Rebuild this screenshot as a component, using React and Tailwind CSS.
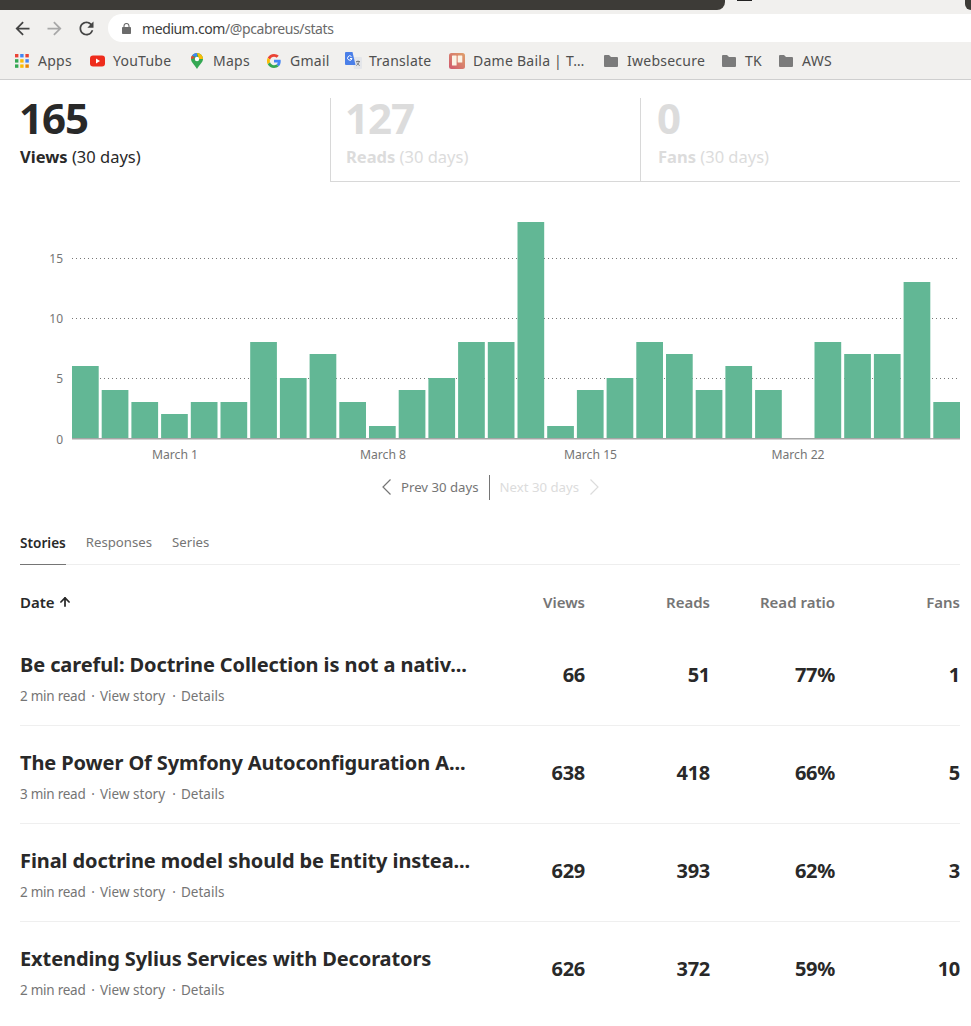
import React from "react";
import { ArrowUp } from "lucide-react";

const bars = [6,4,3,2,3,3,8,5,7,3,1,4,5,8,8,18,1,4,5,8,7,4,6,4,0,8,7,7,13,3];

const Material = ({ d, fill, size = 21 }) => (
  <svg width={size} height={size} viewBox="0 0 24 24" className="shrink-0"><path d={d} fill={fill} /></svg>
);
const BACK = "M20 11H7.830l5.590-5.590L12 4l-8 8 8 8 1.410-1.410L7.830 13H20v-2z";
const FORWARD = "M4 11h12.170l-5.590-5.590L12 4l8 8-8 8-1.410-1.410L16.170 13H4v-2z";
const RELOAD = "M17.650 6.350A7.958 7.958 0 0 0 12 4c-4.420 0-7.990 3.580-7.990 8s3.570 8 7.990 8c3.730 0 6.840-2.550 7.730-6h-2.080A5.990 5.990 0 0 1 12 18c-3.310 0-6-2.690-6-6s2.690-6 6-6c1.660 0 3.140.690 4.220 1.780L13 11h7V4l-2.350 2.350z";

const LockIcon = () => (
  <svg width="9" height="11" viewBox="0 0 9 11" className="shrink-0">
    <path d="M2 4.500V3a2.500 2.500 0 0 1 5 0v1.500" fill="none" stroke="#6b6b6b" strokeWidth="1.100" />
    <rect x="0" y="4" width="9" height="7" rx="0.800" fill="#6b6b6b" />
  </svg>
);

const Folder = () => (
  <svg width="14" height="12" viewBox="0 0 14 12" className="shrink-0"><path d="M1 0h4l2 2h6a1 1 0 0 1 1 1v8a1 1 0 0 1-1 1H1a1 1 0 0 1-1-1V1a1 1 0 0 1 1-1z" fill="#7b7b7b"/></svg>
);

const AppsIcon = () => {
  const c = ["#ea4335","#4285f4","#ea4335","#34a853","#fbbc05","#4285f4","#34a853","#fbbc05","#ea8600"];
  return (
    <svg width="14" height="14" viewBox="0 0 14 14" className="shrink-0">
      {c.map((f,i)=><rect key={i} x={(i%3)*5.2} y={Math.floor(i/3)*5.2} width="3.400" height="3.400" fill={f}/>)}
    </svg>
  );
};
const YouTube = () => (
  <svg width="15" height="12" viewBox="0 0 15 12" className="shrink-0"><rect width="15" height="11" y="0.500" rx="3" fill="#ee2c1c"/><path d="M6 3.500v5l4-2.500z" fill="#fff"/></svg>
);
const Maps = () => (
  <svg width="12" height="16" viewBox="0 0 12 16" className="shrink-0">
    <path d="M6 0a6 6 0 0 1 6 6c0 3-3 5-6 10C3 11 0 9 0 6a6 6 0 0 1 6-6z" fill="#34a853"/>
    <path d="M1 2.500A6 6 0 0 1 6 0v4z" fill="#4285f4"/>
    <path d="M6 0a6 6 0 0 1 6 6H8z" fill="#fbbc05"/>
    <path d="M0 6a6 6 0 0 1 1-3.500L4 5z" fill="#ea4335"/>
    <circle cx="6" cy="6" r="2.200" fill="#fff"/>
  </svg>
);
const Google = () => (
  <svg width="14" height="14" viewBox="0 0 48 48" className="shrink-0">
    <path fill="#EA4335" d="M24 9.500c3.500 0 6.700 1.200 9.200 3.600l6.900-6.900C35.900 2.400 30.500 0 24 0 14.600 0 6.500 5.400 2.600 13.200l8 6.200C12.500 13.700 17.800 9.500 24 9.500z"/>
    <path fill="#4285F4" d="M47 24.500c0-1.600-.1-3.100-.4-4.500H24v9h12.900c-.6 3-2.200 5.500-4.700 7.200l7.700 6c4.500-4.200 7.100-10.300 7.100-17.700z"/>
    <path fill="#FBBC05" d="M10.500 28.600A14.500 14.500 0 0 1 10.500 19.400l-8-6.200a24 24 0 0 0 0 21.600z"/>
    <path fill="#34A853" d="M24 48c6.500 0 11.900-2.100 15.900-5.800l-7.700-6c-2.200 1.500-4.900 2.300-8.200 2.300-6.200 0-11.500-4.200-13.400-9.900l-8 6.200C6.500 42.600 14.600 48 24 48z"/>
  </svg>
);
const Translate = () => (
  <svg width="17" height="17" viewBox="0 0 17 17" className="shrink-0">
    <path d="M7 5h9a1 1 0 0 1 1 1v10a1 1 0 0 1-1 1H9z" fill="#e4e6ea"/>
    <path d="M1 0h6.500l3 13H1a1 1 0 0 1-1-1V1a1 1 0 0 1 1-1z" fill="#4a7fe8"/>
    <path d="M6.500 4.600A2.200 2.200 0 1 0 7 6.500H5" fill="none" stroke="#fff" strokeWidth="1"/>
    <path d="M11 9.500h4M13 8.500v1M14.300 9.500c-.500 2-2 3.500-3 4M11.800 10.500c.5 1.300 1.800 2.500 3 3" stroke="#70757a" strokeWidth="0.900" fill="none"/>
  </svg>
);
const Trello = () => (
  <svg width="16" height="16" viewBox="0 0 16 16" className="shrink-0">
    <defs>
      <linearGradient id="trelloG" x1="0" y1="1" x2="1" y2="0">
        <stop offset="0" stopColor="#d0586e" />
        <stop offset="1" stopColor="#dfa06a" />
      </linearGradient>
    </defs>
    <rect width="16" height="16" rx="2.500" fill="url(#trelloG)"/>
    <rect x="3" y="2.500" width="4.600" height="10" rx="0.500" fill="#fbf3e6"/>
    <rect x="8.700" y="2.500" width="4.600" height="7" rx="0.500" fill="#fbf3e6"/>
  </svg>
);

const Bookmark = ({ icon, label, gap, width }) => (
  <div className="flex items-center shrink-0" style={{ width }}>
    {icon}
    <span className="text-[14px] text-[#4f4f4f] tracking-[0.25px] whitespace-nowrap" style={{ marginLeft: gap }}>{label}</span>
  </div>
);

const StatTab = ({ num, label, active, className }) => (
  <div className={`h-[84px] ${className} ${active ? "" : "border-l border-b border-[#d8d8d8]"}`}>
    <div className={`text-[42px] leading-[40px] font-bold tracking-[-1px] -ml-[1px] ${active ? "text-[#292929]" : "text-[#dcdcdc]"}`}>{num}</div>
    <div className={`mt-[7px] text-[16.500px] leading-[24px] ${active ? "text-[#292929]" : "text-[#dcdcdc]"}`}>
      <span className="font-bold">{label}</span> (30 days)
    </div>
  </div>
);

const Chart = () => {
  const base = 438;
  const unit = 12;
  return (
    <svg width="971" height="268" viewBox="0 200 971 268" className="block" style={{ fontFamily: "'Noto Sans', sans-serif" }}>
      {[15, 10, 5].map((v) => (
        <g key={v}>
          <line x1="72" x2="958" y1={base - v * unit + 0.500} y2={base - v * unit + 0.500} stroke="#777" strokeWidth="1" strokeDasharray="1 3" />
          <text x="63" y={base - v * unit + 5} textAnchor="end" fontSize="12" fill="#757575">{v}</text>
        </g>
      ))}
      <text x="63" y={444} textAnchor="end" fontSize="12" fill="#757575">0</text>
      {bars.map((v, i) => (
        <rect key={i} x={72 + i * 29.7} y={base - v * unit} width="26.700" height={v * unit} fill="#62b795" />
      ))}
      <rect x="72" y="438" width="888" height="1.500" fill="#a5a5a5" />
      {[["March 1", 175], ["March 8", 383], ["March 15", 590.500], ["March 22", 798]].map(([t, x]) => (
        <text key={t} x={x} y="459" textAnchor="middle" fontSize="12.200" fill="#757575">{t}</text>
      ))}
    </svg>
  );
};

const Chevron = ({ left, color }) => (
  <svg width="9" height="16" viewBox="0 0 9 16" className="shrink-0">
    <path d={left ? "M8.500 .5L1 8l7.500 7.500" : "M.5 .5L8 8l-7.500 7.500"} fill="none" stroke={color} strokeWidth="1.200" />
  </svg>
);

const rows = [
  ["Be careful: Doctrine Collection is not a nativ...", "2 min read", "66", "51", "77%", "1"],
  ["The Power Of Symfony Autoconfiguration A...", "3 min read", "638", "418", "66%", "5"],
  ["Final doctrine model should be Entity instea...", "2 min read", "629", "393", "62%", "3"],
  ["Extending Sylius Services with Decorators", "2 min read", "626", "372", "59%", "10"],
];

const gridCols = "grid grid-cols-[450px_115px_125px_125px_125px]";

export default function App() {
  return (
    <div className="w-[971px] h-[1026px] overflow-hidden bg-white" style={{ fontFamily: "'Noto Sans', sans-serif" }}>
      {/* window tab strip */}
      <div className="flex h-[10px] bg-[#f1f0ee]">
        <div className="w-[725px] bg-[#3d3b37] rounded-br-[8px]" />
        <div className="flex-1 pl-[12px]"><div className="w-[15px] h-[1px] bg-[#222]" /></div>
        <div className="w-[6px] bg-[#3d3b37] rounded-bl-[6px]" />
      </div>
      {/* toolbar */}
      <div className="flex h-[32px] bg-[#f1f0ee] pt-[4px] pl-[12px]">
        <div className="flex items-center gap-[11px] h-[28px]">
          <Material d={BACK} fill="#444444" />
          <Material d={FORWARD} fill="#a8a8a8" />
          <Material d={RELOAD} fill="#444444" />
        </div>
        <div className="ml-[11px] flex-1 h-[28px] bg-white rounded-l-[14px] flex items-center pl-[14px]">
          <LockIcon />
          <span className="ml-[11px] text-[14px] tracking-[-0.4px] text-[#3c3c3c]">medium.com<span className="text-[#6a6a6a]">/@pcabreus/stats</span></span>
        </div>
      </div>
      {/* bookmarks */}
      <div className="flex items-center h-[38px] bg-[#f1f0ee] border-b border-[#cfcfcf] pl-[15px]">
        <Bookmark icon={<AppsIcon />} label="Apps" gap={9} width={75} />
        <Bookmark icon={<YouTube />} label="YouTube" gap={8} width={101} />
        <Bookmark icon={<Maps />} label="Maps" gap={10} width={76} />
        <Bookmark icon={<Google />} label="Gmail" gap={9} width={78} />
        <Bookmark icon={<Translate />} label="Translate" gap={7} width={104} />
        <Bookmark icon={<Trello />} label="Dame Baila | T…" gap={8} width={155} />
        <Bookmark icon={<Folder />} label="Iwebsecure" gap={9} width={118} />
        <Bookmark icon={<Folder />} label="TK" gap={9} width={57} />
        <Bookmark icon={<Folder />} label="AWS" gap={9} width={60} />
      </div>

      {/* stat tabs */}
      <div className="flex pt-[18px] pr-[11px]">
        <StatTab num="165" label="Views" active className="w-[330px] pl-[20px]" />
        <StatTab num="127" label="Reads" className="w-[310px] pl-[15px]" />
        <StatTab num="0" label="Fans" className="flex-1 pl-[17px]" />
      </div>

      <div className="mt-[18px]"><Chart /></div>

      {/* pagination */}
      <div className="flex items-center h-[26px] mt-[6px] pl-[382px] text-[13.200px]">
        <Chevron left color="#757575" />
        <span className="ml-[10px] pt-[1px] text-[#757575] whitespace-nowrap">Prev 30 days</span>
        <div className="w-px h-[25px] bg-[#757575] ml-[10px]" />
        <span className="ml-[10px] pt-[1px] text-[#dcdcdc] whitespace-nowrap">Next 30 days</span>
        <div className="ml-[11px]"><Chevron color="#dcdcdc" /></div>
      </div>

      {/* tabs */}
      <div className="ml-[20px] mr-[11px] mt-[31px] flex h-[34px] border-b border-[#eeeeee] text-[13.200px]">
        <div className="h-[34px] border-b border-[#757575] font-semibold text-[13.600px] text-[#292929] pt-[2px]">Stories</div>
        <div className="ml-[20px] pt-[2px] text-[#757575]">Responses</div>
        <div className="ml-[20px] pt-[2px] text-[#757575]">Series</div>
      </div>

      {/* table header */}
      <div className={`${gridCols} ml-[20px] mr-[11px] mt-[24px] h-[26px] items-center text-[15px] font-semibold text-[#757575]`}>
        <div className="flex items-center text-[#292929] text-[15px]">Date<ArrowUp size={14} strokeWidth={3} className="ml-[3px]" /></div>
        <div className="text-right">Views</div>
        <div className="text-right">Reads</div>
        <div className="text-right">Read ratio</div>
        <div className="text-right">Fans</div>
      </div>

      {/* rows */}
      <div className="ml-[20px] mr-[11px] mt-[13px]">
        {rows.map((r, i) => (
          <div key={i} className={`${gridCols} h-[98px] items-center ${i < rows.length - 1 ? "border-b border-[#efefef]" : ""}`}>
            <div className="self-start pt-[23px]">
              <div className="text-[20px] leading-[28px] font-bold tracking-[-0.1px] text-[#292929] whitespace-nowrap">{r[0]}</div>
              <div className="mt-[7px] flex text-[13.500px] leading-[20px] text-[#757575] whitespace-nowrap">
                <span className="w-[66px] tracking-[-0.25px]">{r[1]}</span>
                <span className="w-[14px] text-center">·</span>
                <span className="w-[67px]">View story</span>
                <span className="w-[14px] text-center">·</span>
                <span>Details</span>
              </div>
            </div>
            {r.slice(2).map((v, j) => (
              <div key={j} className="text-right text-[20px] font-bold tracking-[-0.3px] text-[#292929] self-start pt-[32px]">{v}</div>
            ))}
          </div>
        ))}
      </div>
    </div>
  );
}
